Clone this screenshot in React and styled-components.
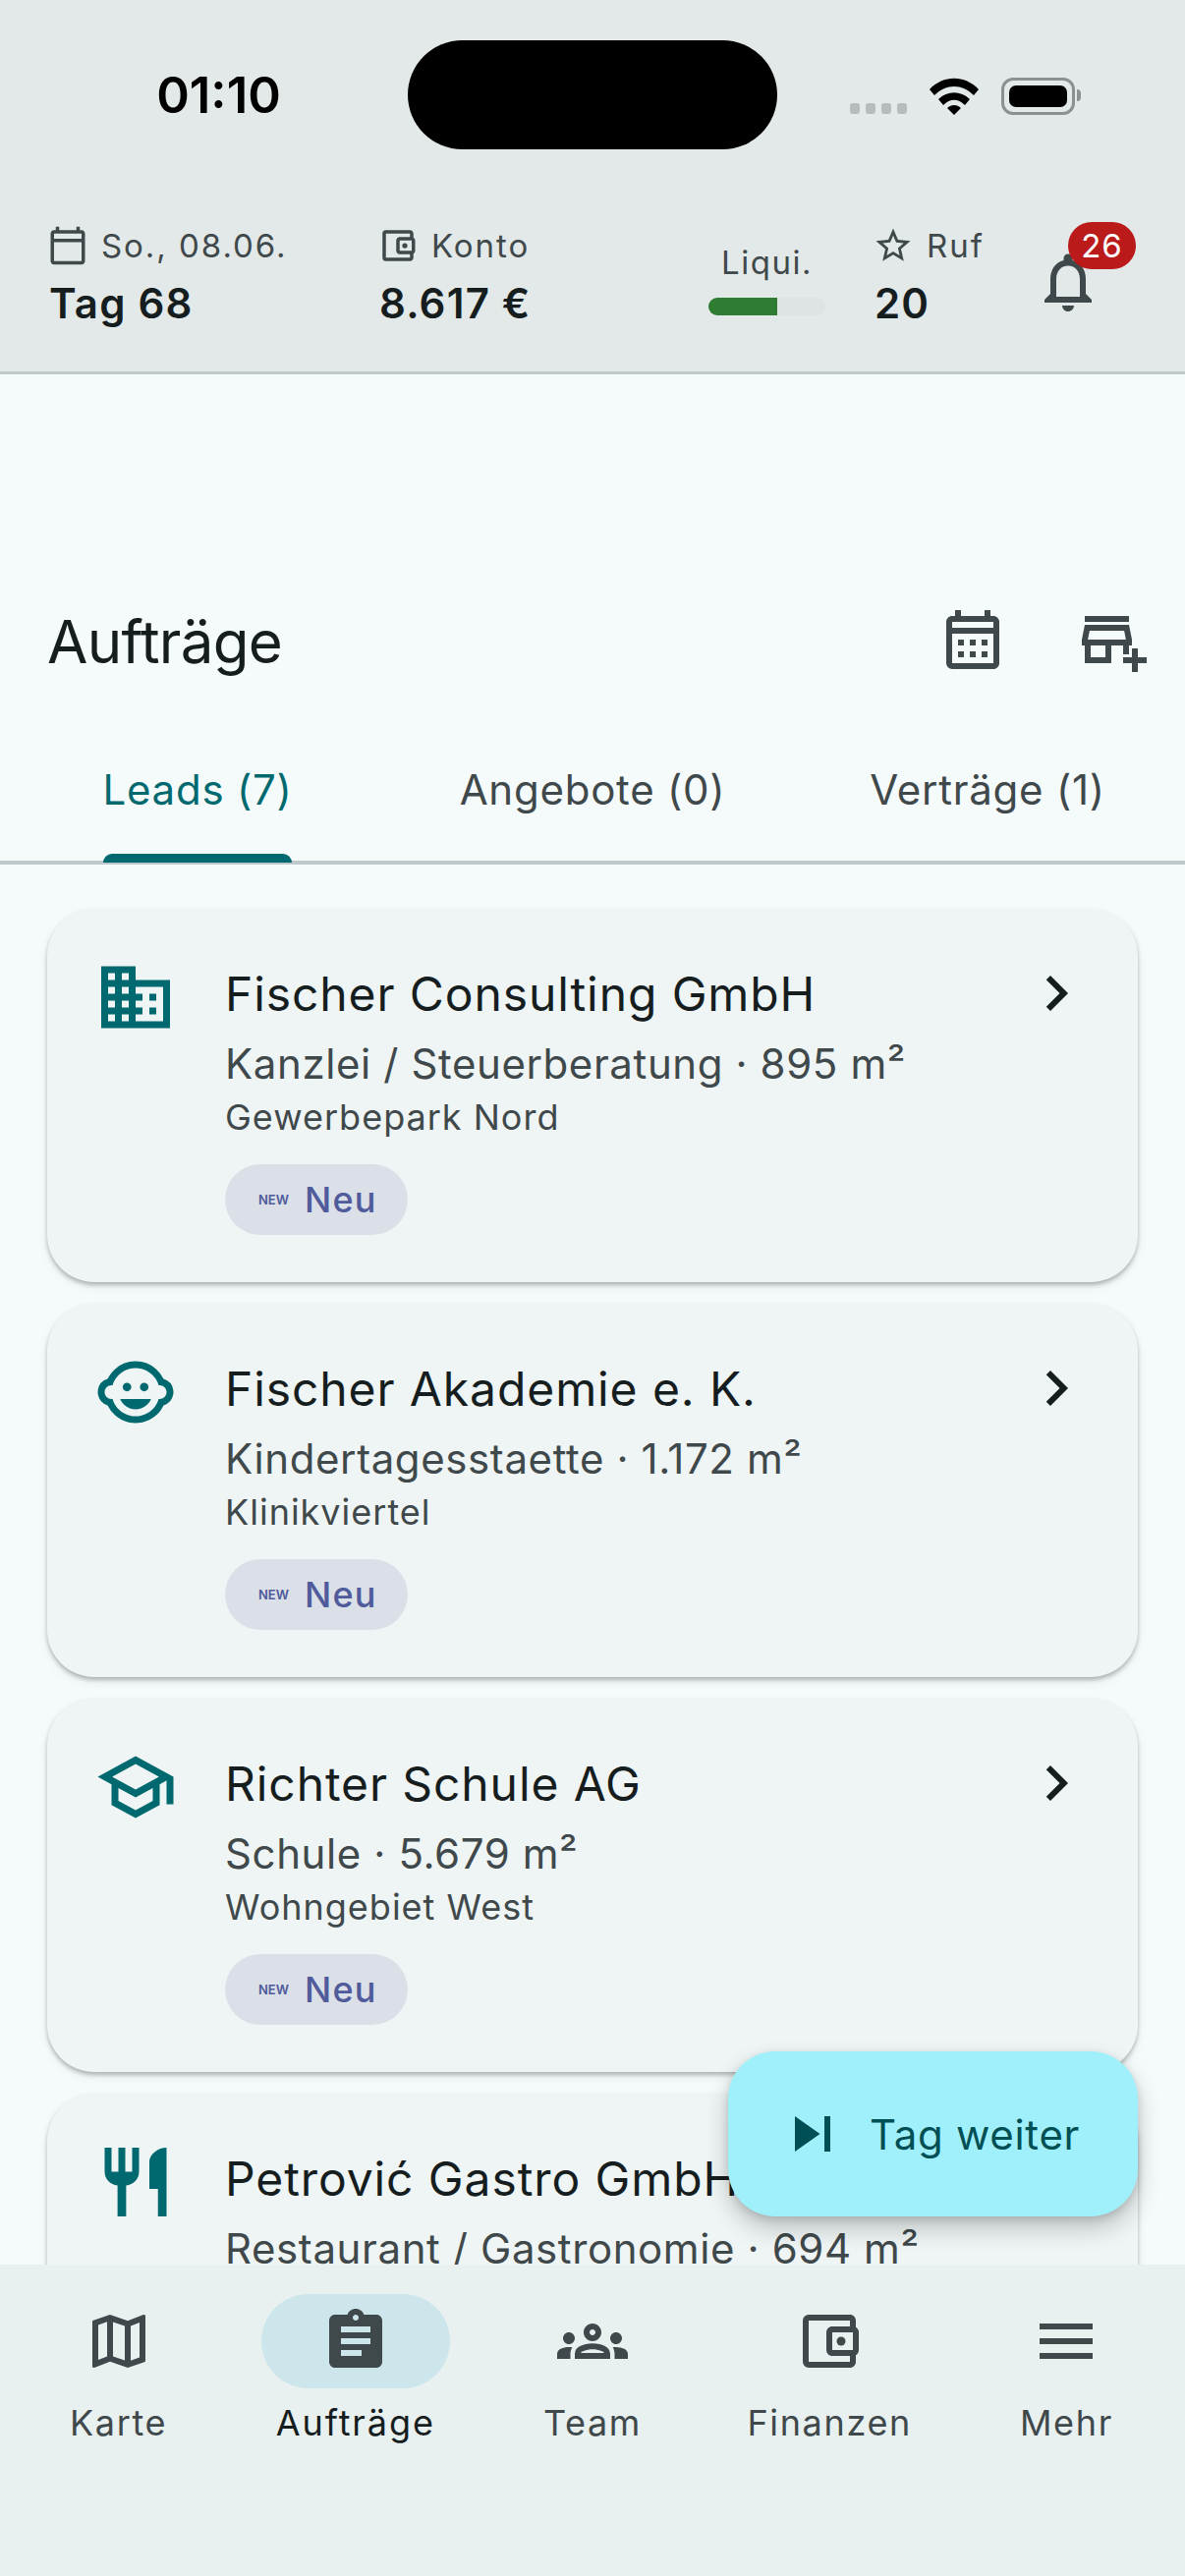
import React from "react";
import styled, { createGlobalStyle } from "styled-components";
import {
  MdOutlineCalendarToday,
  MdOutlineAccountBalanceWallet,
  MdStarBorder,
  MdOutlineNotifications,
  MdOutlineCalendarMonth,
  MdOutlineAddBusiness,
  MdDomain,
  MdOutlineChildCare,
  MdOutlineSchool,
  MdRestaurant,
  MdChevronRight,
  MdSkipNext,
  MdOutlineMap,
  MdAssignment,
  MdOutlineGroups,
  MdMenu,
} from "react-icons/md";

const leads = [
  { name: "Fischer Consulting GmbH", info: "Kanzlei / Steuerberatung · 895 m²", area: "Gewerbepark Nord", Icon: MdDomain },
  { name: "Fischer Akademie e. K.", info: "Kindertagesstaette · 1.172 m²", area: "Klinikviertel", Icon: MdOutlineChildCare },
  { name: "Richter Schule AG", info: "Schule · 5.679 m²", area: "Wohngebiet West", Icon: MdOutlineSchool },
  { name: "Petrović Gastro GmbH", info: "Restaurant / Gastronomie · 694 m²", Icon: MdRestaurant },
];

const tabs = [
  { label: "Leads (7)", active: true },
  { label: "Angebote (0)" },
  { label: "Verträge (1)" },
];

const navItems = [
  { label: "Karte", Icon: MdOutlineMap },
  { label: "Aufträge", Icon: MdAssignment, active: true },
  { label: "Team", Icon: MdOutlineGroups },
  { label: "Finanzen", Icon: MdOutlineAccountBalanceWallet },
  { label: "Mehr", Icon: MdMenu },
];

export default function App() {
  return (
    <>
      <GlobalStyle />
      <Screen>
        <Header>
          <StatusBar>
            <Time>01:10</Time>
            <Island />
            <StatusIcons>
              <SignalDots>
                <i />
                <i />
                <i />
                <i />
              </SignalDots>
              <svg width="50" height="38" viewBox="0 0 50 38">
                <path d="M0 12 C14 -3 36 -3 50 12 L45 18 C33 6 17 6 5 18 Z" fill="#000" />
                <path d="M9 22 C18 13 32 13 41 22 L36 28 C29 21 21 21 14 28 Z" fill="#000" />
                <path d="M18 31 C22 27 28 27 32 31 L25 38 Z" fill="#000" />
              </svg>
              <Battery>
                <BatteryFill />
              </Battery>
            </StatusIcons>
          </StatusBar>
          <Stats>
            <Stat $width={336}>
              <StatLabel>
                <MdOutlineCalendarToday size={42} />
                So., 08.06.
              </StatLabel>
              <StatValue>Tag 68</StatValue>
            </Stat>
            <Stat $width={335}>
              <StatLabel>
                <MdOutlineAccountBalanceWallet size={42} />
                Konto
              </StatLabel>
              <StatValue>8.617 €</StatValue>
            </Stat>
            <Liquidity>
              <LiquidityLabel>Liqui.</LiquidityLabel>
              <LiquidityTrack>
                <LiquidityFill style={{ width: "59%" }} />
              </LiquidityTrack>
            </Liquidity>
            <Stat $width={196}>
              <StatLabel>
                <MdStarBorder size={42} />
                Ruf
              </StatLabel>
              <StatValue>20</StatValue>
            </Stat>
            <Bell>
              <MdOutlineNotifications size={72} />
              <Badge>26</Badge>
            </Bell>
          </Stats>
        </Header>

        <Main>
          <TitleRow>
            <Title>Aufträge</Title>
            <Actions>
              <MdOutlineCalendarMonth size={72} />
              <MdOutlineAddBusiness size={72} />
            </Actions>
          </TitleRow>
          <Tabs>
            {tabs.map((tab) => (
              <Tab key={tab.label} $active={tab.active}>
                <span>{tab.label}</span>
                {tab.active && <TabIndicator />}
              </Tab>
            ))}
          </Tabs>
          <List>
            {leads.map(({ name, info, area, Icon }) => (
              <Card key={name}>
                <CardIcon>
                  <Icon size={84} />
                </CardIcon>
                <CardBody>
                  <CardTitle>{name}</CardTitle>
                  <CardInfo>{info}</CardInfo>
                  {area && (
                    <>
                      <CardArea>{area}</CardArea>
                      <Chip>
                        <ChipMark>NEW</ChipMark>
                        Neu
                      </Chip>
                    </>
                  )}
                </CardBody>
                <Chevron>
                  <MdChevronRight size={72} />
                </Chevron>
              </Card>
            ))}
          </List>
          <Fab>
            <MdSkipNext size={72} />
            Tag weiter
          </Fab>
        </Main>

        <Nav>
          {navItems.map(({ label, Icon, active }) => (
            <NavItem key={label} $active={active}>
              <NavIcon $active={active}>
                <Icon size={72} />
              </NavIcon>
              {label}
            </NavItem>
          ))}
        </Nav>
      </Screen>
    </>
  );
}

const GlobalStyle = createGlobalStyle`
  html, body {
    margin: 0;
    padding: 0;
    background: #f5fafa;
  }
  * {
    box-sizing: border-box;
  }
`;

const Screen = styled.div`
  width: 1206px;
  height: 2622px;
  display: flex;
  flex-direction: column;
  overflow: hidden;
  font-family: Inter, "Liberation Sans", sans-serif;
  color: #161d1e;
  background: #f5fafa;
`;

const Header = styled.header`
  flex: none;
  height: 381px;
  background: #e3e9e9;
  border-bottom: 3px solid #bfc8ca;
`;

const StatusBar = styled.div`
  height: 193px;
  padding-top: 41px;
  display: flex;
  align-items: flex-start;
`;

const Time = styled.div`
  width: 415px;
  height: 111px;
  padding-left: 30px;
  display: flex;
  align-items: center;
  justify-content: center;
  font-size: 51px;
  font-weight: 600;
  color: #000;
`;

const Island = styled.div`
  width: 376px;
  height: 111px;
  border-radius: 56px;
  background: #000;
`;

const StatusIcons = styled.div`
  height: 111px;
  padding: 38px 0 0 74px;
  display: flex;
  align-items: flex-start;
  gap: 23px;
`;

const SignalDots = styled.div`
  display: flex;
  gap: 6px;
  padding-top: 26px;

  i {
    width: 10px;
    height: 11px;
    border-radius: 3px;
    background: #b6bcbd;
  }
`;

const Battery = styled.div`
  position: relative;
  width: 75px;
  height: 38px;
  padding: 5px;
  border: 3px solid #8b9091;
  border-radius: 12px;

  &::after {
    content: "";
    position: absolute;
    right: -9px;
    top: 9px;
    width: 4px;
    height: 12px;
    border-radius: 0 6px 6px 0;
    background: #8b9091;
  }
`;

const BatteryFill = styled.div`
  width: 100%;
  height: 100%;
  border-radius: 7px;
  background: #000;
`;

const Stats = styled.div`
  height: 185px;
  padding: 31px 0 0 50px;
  display: flex;
  align-items: flex-start;
`;

const Stat = styled.div`
  width: ${(p) => p.$width}px;
  flex: none;
`;

const StatLabel = styled.div`
  height: 52px;
  display: flex;
  align-items: center;
  gap: 13px;
  margin-left: -2px;
  font-size: 33px;
  letter-spacing: 1.95px;
  color: #3f484a;

  svg {
    flex: none;
  }
`;

const StatValue = styled.div`
  margin-top: 7px;
  font-size: 42px;
  line-height: 52px;
  font-weight: 600;
  letter-spacing: 1.2px;
`;

const Liquidity = styled.div`
  width: 169px;
  flex: none;
  padding-top: 23px;
`;

const LiquidityLabel = styled.div`
  width: 119px;
  text-align: center;
  font-size: 33px;
  line-height: 40px;
  letter-spacing: 1.5px;
  color: #3f484a;
`;

const LiquidityTrack = styled.div`
  width: 119px;
  height: 18px;
  margin-top: 16px;
  border-radius: 9px;
  overflow: hidden;
  background: #dee4e5;
`;

const LiquidityFill = styled.div`
  height: 100%;
  background: #2e7d32;
`;

const Bell = styled.div`
  position: relative;
  width: 72px;
  height: 72px;
  margin: 27px 0 0 -35px;
  color: #3f484a;
`;

const Badge = styled.div`
  position: absolute;
  left: 36px;
  top: -25px;
  width: 69px;
  height: 48px;
  border-radius: 24px;
  display: flex;
  align-items: center;
  justify-content: center;
  background: #ba1a1a;
  color: #fff;
  font-size: 33px;
  letter-spacing: 1px;
`;

const Main = styled.main`
  position: relative;
  flex: 1;
  min-height: 0;
  overflow: hidden;
`;

const TitleRow = styled.div`
  height: 349px;
  padding: 234px 36px 0 48px;
  display: flex;
  align-items: flex-start;
  justify-content: space-between;
`;

const Title = styled.h1`
  margin: 0;
  font-size: 60px;
  line-height: 76px;
  font-weight: 400;
  letter-spacing: -0.7px;
`;

const Actions = styled.div`
  display: flex;
  gap: 72px;
  color: #3f484a;
`;

const Tabs = styled.div`
  height: 150px;
  display: grid;
  grid-template-columns: repeat(3, 1fr);
  border-bottom: 4px solid #bfc8ca;
`;

const Tab = styled.div`
  position: relative;
  display: flex;
  align-items: center;
  justify-content: center;
  font-size: 42px;
  font-weight: 400;
  letter-spacing: 0.75px;
  color: ${(p) => (p.$active ? "#00696f" : "#3f484a")};
`;

const TabIndicator = styled.div`
  position: absolute;
  left: 105px;
  bottom: -2px;
  width: 192px;
  height: 9px;
  border-radius: 9px 9px 0 0;
  background: #00696f;
`;

const List = styled.div`
  padding: 45px 48px 0;
  display: flex;
  flex-direction: column;
  gap: 22px;
`;

const Card = styled.article`
  flex: none;
  height: 380px;
  padding: 48px 47px 0 48px;
  display: flex;
  align-items: flex-start;
  border-radius: 48px;
  background: #eff5f5;
  box-shadow: 0 3px 4px rgba(0, 0, 0, 0.25), 0 5px 12px rgba(0, 0, 0, 0.06);
`;

const CardIcon = styled.div`
  flex: none;
  width: 84px;
  height: 84px;
  color: #00696f;
`;

const CardBody = styled.div`
  flex: 1;
  min-width: 0;
  padding-left: 49px;
`;

const CardTitle = styled.div`
  font-size: 48px;
  line-height: 60px;
  font-weight: 400;
  letter-spacing: 0.9px;
  margin-top: 9px;
`;

const CardInfo = styled.div`
  margin-top: 11px;
  font-size: 42px;
  line-height: 60px;
  letter-spacing: 0.6px;
  color: #3f484a;
`;

const CardArea = styled.div`
  margin-top: 2px;
  font-size: 36px;
  line-height: 44px;
  letter-spacing: 1px;
  color: #3f484a;
`;

const Chip = styled.div`
  width: 186px;
  height: 72px;
  margin-top: 26px;
  padding-left: 34px;
  display: flex;
  align-items: center;
  gap: 16px;
  border-radius: 36px;
  background: #dadfe8;
  color: #4f5b9a;
  font-size: 36px;
  font-weight: 500;
  letter-spacing: 1.2px;
`;

const ChipMark = styled.span`
  font-size: 13px;
  font-weight: 600;
  letter-spacing: 0;
`;

const Chevron = styled.div`
  flex: none;
  width: 72px;
  height: 72px;
  margin-top: 2px;
`;

const Fab = styled.button`
  position: absolute;
  right: 48px;
  bottom: 49px;
  width: 417px;
  height: 168px;
  padding: 0 0 0 50px;
  display: flex;
  align-items: center;
  gap: 22px;
  border: none;
  border-radius: 48px;
  background: #a0f0fb;
  color: #004f54;
  font-family: inherit;
  font-size: 42px;
  font-weight: 400;
  letter-spacing: 0.7px;
  box-shadow: 0 12px 24px rgba(0, 0, 0, 0.22), 0 3px 8px rgba(0, 0, 0, 0.12);
`;

const Nav = styled.nav`
  position: relative;
  flex: none;
  height: 317px;
  padding-top: 30px;
  display: grid;
  grid-template-columns: repeat(5, 1fr);
  align-items: start;
  background: #e9f0f0;
`;

const NavItem = styled.div`
  display: flex;
  flex-direction: column;
  align-items: center;
  gap: 13px;
  font-size: 36px;
  line-height: 44px;
  letter-spacing: ${(p) => (p.$active ? "1.9px" : "1.65px")};
  color: ${(p) => (p.$active ? "#161d1e" : "#3f484a")};
`;

const NavIcon = styled.div`
  width: 192px;
  height: 96px;
  display: flex;
  align-items: center;
  justify-content: center;
  border-radius: 48px;
  color: #3f484a;
  background: ${(p) => (p.$active ? "#cce6ec" : "transparent")};
`;
